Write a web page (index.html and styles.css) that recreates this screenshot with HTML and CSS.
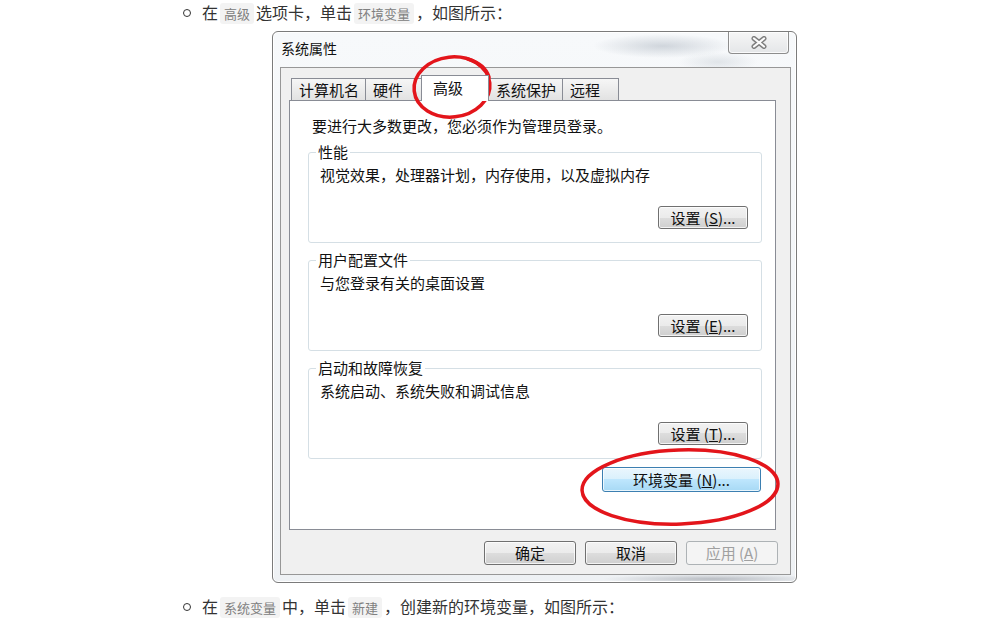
FILE: index.html
```html
<!DOCTYPE html>
<html lang="zh-CN">
  <head>
    <meta charset="UTF-8">
    <title>环境变量</title>
    <link rel="stylesheet" href="styles.css">
  </head>
  <body>
    <ul class="steps">
      <li>在<code>高级</code>选项卡，单击<code>环境变量</code>，如图所示：
        <div class="shot">
          <div class="win">
            <div class="win-title">
              <span>系统属性</span>
              <span class="win-close">
                <svg width="18" height="13" viewBox="0 0 18 13">
                  <path d="M4 2.5 L14 10.5 M14 2.5 L4 10.5" stroke="#7e7e7e" stroke-width="5" stroke-linecap="round"/>
                  <path d="M4 2.5 L14 10.5 M14 2.5 L4 10.5" stroke="#fbfbfb" stroke-width="2.2" stroke-linecap="round"/>
                </svg>
              </span>
            </div>
            <div class="win-body">
              <div class="tabs">
                <span class="tab">计算机名</span>
                <span class="tab">硬件</span>
                <span class="tab on">高级</span>
                <span class="tab">系统保护</span>
                <span class="tab">远程</span>
              </div>
              <div class="panel">
                <p class="note">要进行大多数更改，您必须作为管理员登录。</p>
                <fieldset class="group">
                  <legend>性能</legend>
                  <p>视觉效果，处理器计划，内存使用，以及虚拟内存</p>
                  <div class="row"><button class="btn btn-sm">设置 (<u>S</u>)...</button></div>
                </fieldset>
                <fieldset class="group">
                  <legend>用户配置文件</legend>
                  <p>与您登录有关的桌面设置</p>
                  <div class="row"><button class="btn btn-sm">设置 (<u>E</u>)...</button></div>
                </fieldset>
                <fieldset class="group">
                  <legend>启动和故障恢复</legend>
                  <p>系统启动、系统失败和调试信息</p>
                  <div class="row"><button class="btn btn-sm">设置 (<u>T</u>)...</button></div>
                </fieldset>
                <div class="row env-row"><button class="btn btn-env">环境变量 (<u>N</u>)...</button></div>
              </div>
              <div class="actions">
                <button class="btn">确定</button>
                <button class="btn">取消</button>
                <button class="btn" disabled>应用 (<u>A</u>)</button>
              </div>
            </div>
          </div>
          <!-- 红圈标注 -->
          <svg class="marks" width="525" height="552" viewBox="0 0 525 552">
            <ellipse cx="180" cy="56" rx="38" ry="30" transform="rotate(-6 180 56)"/>
            <path class="tail" d="M196 28 C206 31 214 37 217 46"/>
            <ellipse cx="408" cy="456" rx="98" ry="37" transform="rotate(-2 408 456)"/>
          </svg>
        </div>
      </li>
      <li>在<code>系统变量</code>中，单击<code>新建</code>，创建新的环境变量，如图所示：</li>
    </ul>
  </body>
</html>
```

FILE: styles.css
```css
body { margin: 0; background: #fff; color: #333; font: 16px/24px "Noto Sans CJK SC", sans-serif; }
.steps { margin: 0; padding: 0 0 0 203px; list-style: none; }
.steps li::before { content: ""; display: inline-block; width: 6px; height: 6px; border: 1.5px solid #333; border-radius: 50%; margin: 0 11px 0 -20px; vertical-align: 2px; }
.steps code { font: 13px/18px "Noto Sans CJK SC", monospace; color: #808080; background: #f3f3f3; border-radius: 3px; padding: 1px 4px; margin: 0 2px; }

/* 截图 */
.shot { position: relative; width: 525px; margin: 7px 0 11px 69px; line-height: 18px; }
.win { box-sizing: border-box; width: 525px; height: 552px; display: flex; flex-direction: column; padding: 0 5px 7px 7px; border: 1px solid #7b7b7b; border-radius: 6px; box-shadow: inset 0 0 0 1px #fff; color: #111; font: 15px/18px "Noto Sans CJK SC", sans-serif;
  background:
    radial-gradient(ellipse 70px 12px at 390px 14px, rgba(160,170,182,.45), rgba(160,170,182,0)),
    radial-gradient(ellipse 40px 10px at 445px 30px, rgba(190,198,206,.4), rgba(190,198,206,0)),
    radial-gradient(ellipse 110px 5px at 440px 547px, rgba(120,125,135,.45), rgba(120,125,135,0)),
    linear-gradient(#f7f9fb, #eef1f4); }
.win-title { box-sizing: border-box; height: 35px; display: flex; align-items: center; justify-content: space-between; padding: 0 0 3px 1px; font-size: 14px; }
.win-close { align-self: flex-start; box-sizing: border-box; width: 61px; height: 22px; margin-right: 2px; display: flex; align-items: center; justify-content: center; border: 1px solid #8d8d8d; border-top: 0; border-radius: 0 0 4px 4px; background: linear-gradient(#f6f6f6, #e4e6e8); box-shadow: inset 0 0 0 1px rgba(255,255,255,.8); }

.win-body { flex: 1; display: flex; flex-direction: column; border: 1px solid #979797; background: #f0f0f0; padding: 7px 12px 9px 8px; }

.tabs { display: flex; align-items: flex-end; margin: 0 0 -1px 2px; }
.tab { box-sizing: border-box; height: 23px; min-width: 57px; padding: 1px 6px 0 7px; margin-right: -1px; border: 1px solid #898c95; background: linear-gradient(#f6f6f6, #e2e2e2); line-height: 20px; }
.tab.on { position: relative; z-index: 1; height: 26px; min-width: 68px; padding: 0 0 0 11px; border-bottom: 0; background: #fff; line-height: 24px; }

.panel { flex: 1; margin-right: 2px; background: #fff; border: 1px solid #898c95; padding: 16px 13px 0 18px; }
.note { margin: 0 0 8px 4px; }
.group { margin: 0 0 8px; padding: 5px 13px 13px 11px; min-width: 0; border: 1px solid #d5dfe5; border-radius: 3px; }
.group legend { padding: 0 2px; margin-left: -4px; line-height: 18px; }
.group p { margin: 0; }
.row { display: flex; justify-content: flex-end; margin-top: 22px; }
.env-row { margin: 6px 1px 0 0; }

.actions { display: flex; justify-content: flex-end; gap: 9px; margin-top: 11px; }

.btn { box-sizing: border-box; width: 92px; height: 24px; padding: 0; border: 1px solid #707070; border-radius: 3px; color: #111; font: 15px/20px "Noto Sans CJK SC", sans-serif; text-align: center; background: linear-gradient(#f2f2f2, #ebebeb 50%, #dddddd 50%, #cfcfcf); box-shadow: inset 0 0 0 1px rgba(255,255,255,.75); }
.btn u { text-decoration: underline; }
.btn-sm { width: 90px; height: 23px; }
.btn-env { width: 159px; height: 25px; border-color: #3c7fb1; background: linear-gradient(#eaf6fd, #d9f0fc 50%, #bee6fd 50%, #a7d9f5); }
.btn:disabled { color: #a0a0a0; border-color: #adb2b5; background: #f4f4f4; box-shadow: none; }

.marks { position: absolute; left: 0; top: 0; overflow: visible; pointer-events: none; }
.marks ellipse, .marks .tail { fill: none; stroke: #e3151b; stroke-width: 3.5; stroke-linecap: round; }
```
